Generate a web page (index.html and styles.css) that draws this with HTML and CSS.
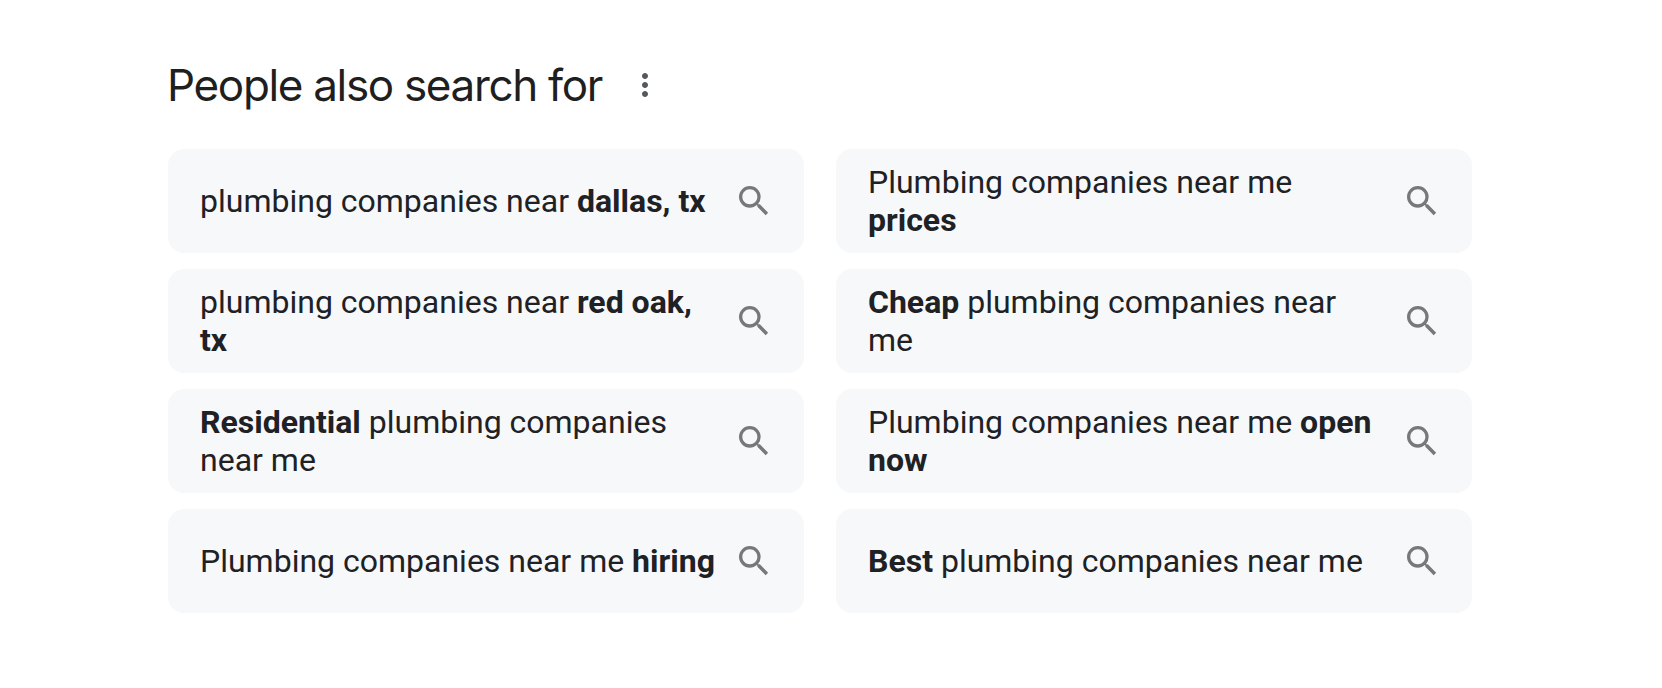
FILE: index.html
```
<!DOCTYPE html>
<html lang="en">
<head>
  <meta charset="UTF-8" />
  <meta name="viewport" content="width=device-width, initial-scale=1.0"/>
  <title>People also search for</title>
  <link rel="stylesheet" href="styles.css">
</head>
<body>

  <svg class="sprite" aria-hidden="true">
    <symbol id="search" viewBox="0 0 24 24">
      <path d="M15.5 14h-.79l-.28-.27A6.471 6.471 0 0 0 16 9.5 6.5 6.5 0 1 0 9.5 16c1.61 0 3.09-.59 4.23-1.57l.27.28v.79l5 4.99L20.49 19l-4.99-5zm-6 0C7.01 14 5 11.99 5 9.5S7.01 5 9.5 5 14 7.01 14 9.5 11.99 14 9.5 14z"/>
    </symbol>
  </svg>

  <main class="related">
    <div class="header">
      <h1>People also search for</h1>
      <button class="menu" aria-label="About this result">
        <svg viewBox="0 0 24 24"><path d="M12 8c1.1 0 2-.9 2-2s-.9-2-2-2-2 .9-2 2 .9 2 2 2zm0 2c-1.1 0-2 .9-2 2s.9 2 2 2 2-.9 2-2-.9-2-2-2zm0 6c-1.1 0-2 .9-2 2s.9 2 2 2 2-.9 2-2-.9-2-2-2z"/></svg>
      </button>
    </div>

    <div class="grid">
      <a class="card"><span class="text">plumbing companies near <b>dallas, tx</b></span><svg class="icon"><use href="#search"/></svg></a>
      <a class="card"><span class="text">Plumbing companies near me <b>prices</b></span><svg class="icon"><use href="#search"/></svg></a>
      <a class="card"><span class="text">plumbing companies near <b>red oak, tx</b></span><svg class="icon"><use href="#search"/></svg></a>
      <a class="card"><span class="text"><b>Cheap</b> plumbing companies near me</span><svg class="icon"><use href="#search"/></svg></a>
      <a class="card"><span class="text"><b>Residential</b> plumbing companies near me</span><svg class="icon"><use href="#search"/></svg></a>
      <a class="card"><span class="text">Plumbing companies near me <b>open now</b></span><svg class="icon"><use href="#search"/></svg></a>
      <a class="card"><span class="text">Plumbing companies near me <b>hiring</b></span><svg class="icon"><use href="#search"/></svg></a>
      <a class="card"><span class="text"><b>Best</b> plumbing companies near me</span><svg class="icon"><use href="#search"/></svg></a>
    </div>
  </main>

</body>
</html>
```
FILE: styles.css
```
body {
  margin: 0; background: #fff; color: #202124;
  font-family: Roboto, Arial, sans-serif;
}
.sprite { display: none; }
.related {
  width: 1304px; margin-left: 168px; padding-top: 57px;
}
.header {
  display: flex; align-items: center; height: 56px;
}
.header h1 {
  margin: 0 0 0 -1px; font-family: "Google Sans", Inter, sans-serif;
  font-size: 44px; font-weight: 400; line-height: 56px;
  width: 435px; white-space: nowrap; letter-spacing: -1.33px;
  color: #1f1f1f;
}
.menu {
  border: 0; background: none; padding: 0; margin-left: 25px;
  width: 36px; height: 36px;
}
.menu svg { display: block; width: 36px; height: 36px; fill: #55585d; }
.grid {
  display: grid; grid-template-columns: 1fr 1fr;
  grid-auto-rows: 104px; gap: 16px 32px; margin-top: 36px;
}
.card {
  display: flex; align-items: center; box-sizing: border-box;
  padding: 0 30px 0 32px; background: #f7f8fa; border-radius: 16px;
}
.text {
  flex: 1; font-size: 32px; line-height: 38px; margin-right: 16px;
}
.icon { flex: none; width: 40px; height: 40px; fill: #77787a; }
```
